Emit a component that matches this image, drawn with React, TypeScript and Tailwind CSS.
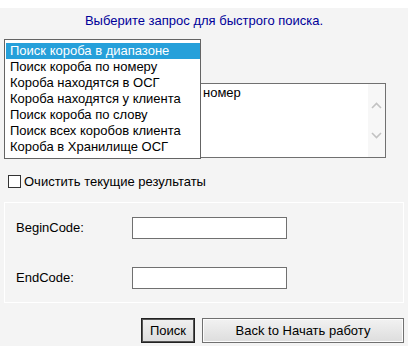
import { useState } from 'react'

const queries = [
  'Поиск короба в диапазоне',
  'Поиск короба по номеру',
  'Короба находятся в ОСГ',
  'Короба находятся у клиента',
  'Поиск короба по слову',
  'Поиск всех коробов клиента',
  'Короба в Хранилище ОСГ',
]

function Chevron({ up }: { up?: boolean }) {
  return (
    <svg width="11" height="7" viewBox="0 0 11 7" className="block">
      <path
        d={up ? 'M1 6 L5.5 1.5 L10 6' : 'M1 1 L5.5 5.5 L10 1'}
        fill="none"
        stroke="#c2c2c2"
        strokeWidth="1.6"
      />
    </svg>
  )
}

function CodeField({ label }: { label: string }) {
  return (
    <div className="flex items-center">
      <span className="w-[116px] text-[13px]">{label}</span>
      <input
        type="text"
        className="h-[22px] w-[155px] border border-[#707070] bg-white px-1 text-[13px] outline-none"
      />
    </div>
  )
}

export default function App() {
  const [selected] = useState(0)

  return (
    <div className="h-[352px] w-[417px] bg-white pt-2 font-['Liberation_Sans',Arial,sans-serif] text-black">
      <div className="relative h-[338px] w-[408px] bg-[#f4f4f4] pt-[5px]">
        <p className="text-center text-[13px] leading-[15px] text-[#000099]">
          Выберите запрос для быстрого поиска.
        </p>

        {/* description box, mostly covered by the open dropdown */}
        <div className="ml-1 mt-[55px] flex h-[75px] w-[382px] border border-[#707070] bg-white">
          <div className="flex-1 pl-[198px] pt-px text-[13px] leading-[15px]">номер</div>
          <div className="flex w-[17px] flex-col items-center bg-[#f7f7f7] pt-[18px]">
            <Chevron up />
            <div className="h-[23px]" />
            <Chevron />
          </div>
        </div>

        <label className="ml-2 mt-4 flex items-center gap-[3px] text-[13px] leading-[15px]">
          <span className="block size-[13px] border border-[#333] bg-white" />
          Очистить текущие результаты
        </label>

        <div className="ml-1 mt-[13px] flex h-[101px] w-[400px] flex-col gap-[28px] border border-white pl-[11px] pt-[14px]">
          <CodeField label="BeginCode:" />
          <CodeField label="EndCode:" />
        </div>

        <div className="mr-1 mt-[15px] flex justify-end gap-[7px]">
          <button className="h-[25px] w-[54px] border border-[#222] bg-linear-to-b from-[#f0f0f0] to-[#dcdcdc] text-[13px] shadow-[inset_0_0_0_1px_#555]">
            Поиск
          </button>
          <button className="h-[25px] w-[202px] border border-[#707070] bg-linear-to-b from-[#f2f2f2] to-[#dddddd] text-[13px] shadow-[inset_0_0_0_1px_#fcfcfc]">
            Back to Начать работу
          </button>
        </div>

        {/* open select list */}
        <ul className="absolute left-1 top-[31px] w-[197px] border border-[#646464] bg-white py-[3px] pl-px text-[13px]">
          {queries.map((q, i) => (
            <li
              key={q}
              className={`h-4 pl-1 leading-4 ${i === selected ? 'bg-[#26a0da] text-white' : ''}`}
            >
              {q}
            </li>
          ))}
        </ul>
      </div>
    </div>
  )
}
